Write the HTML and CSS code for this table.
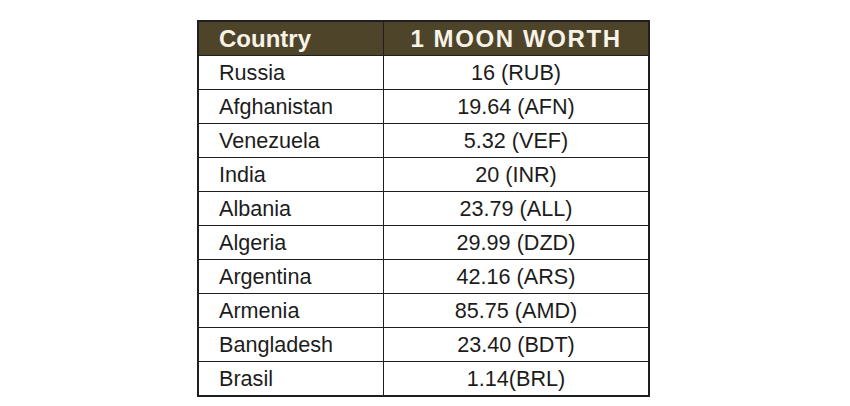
FILE: index.html
```html
<!DOCTYPE html>
<html>
<head>
<meta charset="utf-8">
<link rel="stylesheet" href="styles.css">
</head>
<body>
<div class="page">
<table class="rates">
<thead>
<tr><th class="c1">Country</th><th class="c2">1 MOON WORTH</th></tr>
</thead>
<tbody>
<tr><td class="c1">Russia</td><td class="c2">16 (RUB)</td></tr>
<tr><td class="c1">Afghanistan</td><td class="c2">19.64 (AFN)</td></tr>
<tr><td class="c1">Venezuela</td><td class="c2">5.32 (VEF)</td></tr>
<tr><td class="c1">India</td><td class="c2">20 (INR)</td></tr>
<tr><td class="c1">Albania</td><td class="c2">23.79 (ALL)</td></tr>
<tr><td class="c1">Algeria</td><td class="c2">29.99 (DZD)</td></tr>
<tr><td class="c1">Argentina</td><td class="c2">42.16 (ARS)</td></tr>
<tr><td class="c1">Armenia</td><td class="c2">85.75 (AMD)</td></tr>
<tr><td class="c1">Bangladesh</td><td class="c2">23.40 (BDT)</td></tr>
<tr><td class="c1">Brasil</td><td class="c2">1.14(BRL)</td></tr>
</tbody>
</table>
</div>
</body>
</html>
```

FILE: styles.css
```css
html, body {
  margin: 0;
  padding: 0;
  background: #ffffff;
}
.page {
  padding: 20px 0 0 197px;
}
.rates {
  border-collapse: collapse;
  font-family: "Liberation Sans", Arial, sans-serif;
  color: #1c1c1c;
  border: 2px solid #1f1f1f;
}
.rates th, .rates td {
  border: 1px solid #1f1f1f;
  padding: 0;
  height: 33px;
  line-height: 1;
}
.rates th {
  background: #4e4429;
  color: #f7f3e8;
  font-size: 24px;
  font-weight: bold;
}
.rates td {
  font-size: 21.6px;
}
.c1 {
  width: 164px;
  text-align: left;
  padding-left: 20px !important;
}
.c2 {
  width: 264px;
  text-align: center;
}
th.c2 {
  letter-spacing: 1.6px;
}
```
